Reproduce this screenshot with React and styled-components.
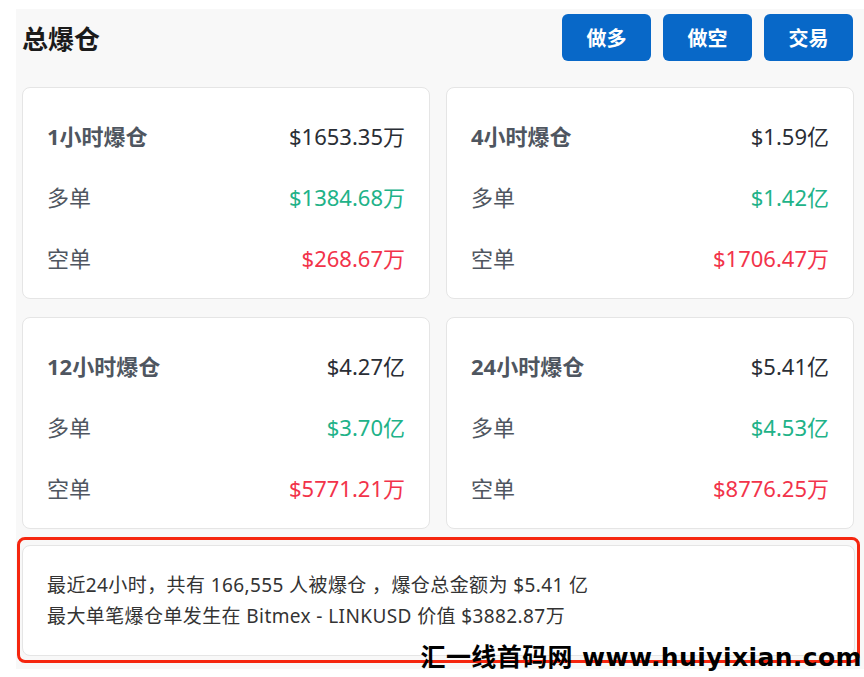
import styled, { createGlobalStyle } from "styled-components"

const GlobalStyle = createGlobalStyle`
    body {
        margin: 0;
        background: #ffffff;
        font-family: "Noto Sans", "Noto Sans CJK SC", sans-serif;
    }
`

const stats = [
    { title: "1小时爆仓", total: "$1653.35万", long: "$1384.68万", short: "$268.67万" },
    { title: "4小时爆仓", total: "$1.59亿", long: "$1.42亿", short: "$1706.47万" },
    { title: "12小时爆仓", total: "$4.27亿", long: "$3.70亿", short: "$5771.21万" },
    { title: "24小时爆仓", total: "$5.41亿", long: "$4.53亿", short: "$8776.25万" },
]

export default function App() {
    return (
        <>
            <GlobalStyle />
            <Page>
                <Panel>
                    <Header>
                        <Title>总爆仓</Title>
                        <Actions>
                            <ActionButton>做多</ActionButton>
                            <ActionButton>做空</ActionButton>
                            <ActionButton>交易</ActionButton>
                        </Actions>
                    </Header>
                    <Grid>
                        {stats.map((s) => (
                            <Card key={s.title}>
                                <Row>
                                    <Label $bold>{s.title}</Label>
                                    <Value>{s.total}</Value>
                                </Row>
                                <Row>
                                    <Label>多单</Label>
                                    <Value $tone="up">{s.long}</Value>
                                </Row>
                                <Row>
                                    <Label>空单</Label>
                                    <Value $tone="down">{s.short}</Value>
                                </Row>
                            </Card>
                        ))}
                    </Grid>
                    <Highlight>
                        <Summary>
                            <Line>最近24小时，共有 166,555 人被爆仓 ，爆仓总金额为 $5.41 亿</Line>
                            <Line>最大单笔爆仓单发生在 Bitmex - LINKUSD 价值 $3882.87万</Line>
                        </Summary>
                    </Highlight>
                </Panel>
                <Watermark>汇一线首码网 www.huiyixian.com</Watermark>
            </Page>
        </>
    )
}

const Page = styled.div`
    position: relative;
    width: 864px;
    height: 677px;
    padding: 9px 0 0 16px;
    box-sizing: border-box;
    overflow: hidden;
`

const Panel = styled.div`
    background: #f8f8f8;
    height: 660px;
    padding: 5px 0 0 6px;
    box-sizing: border-box;
`

const Header = styled.div`
    display: flex;
    align-items: center;
    justify-content: space-between;
    width: 831px;
    height: 47px;
`

const Title = styled.h1`
    margin: 0;
    font-size: 26px;
    font-weight: 700;
    color: #1b1b1b;
    line-height: 1;
    padding-top: 2px;
`

const Actions = styled.div`
    display: flex;
    gap: 12px;
`

const ActionButton = styled.button`
    width: 89px;
    height: 47px;
    border: none;
    border-radius: 6px;
    background: #0868c8;
    color: #ffffff;
    font-family: "Noto Sans CJK SC", sans-serif;
    font-size: 20px;
    font-weight: 700;
    cursor: pointer;
`

const Grid = styled.div`
    display: grid;
    grid-template-columns: 408px 408px;
    column-gap: 16px;
    row-gap: 18px;
    margin-top: 26px;
`

const Card = styled.div`
    background: #ffffff;
    border: 1px solid #e5e5e5;
    border-radius: 8px;
    height: 212px;
    box-sizing: border-box;
    padding: 16px 24px 0 24px;
    display: flex;
    flex-direction: column;
`

const Row = styled.div`
    display: flex;
    align-items: center;
    justify-content: space-between;
    height: 61px;
`

const Label = styled.span`
    font-size: 22px;
    font-weight: ${(p) => (p.$bold ? 700 : 400)};
    color: #4f5660;
`

const toneColors = {
    up: "#21b288",
    down: "#f2334a",
}

const Value = styled.span`
    font-size: 22px;
    color: ${(p) => toneColors[p.$tone] || "#2a2e35"};
`

const Highlight = styled.div`
    margin: 8px 0 0 -5px;
    width: 843px;
    height: 126px;
    border: 3px solid #f5260f;
    border-radius: 8px;
    box-sizing: border-box;
    padding: 5px 2px 4px 2px;
`

const Summary = styled.div`
    background: #ffffff;
    border: 1px solid #e5e5e5;
    border-radius: 8px;
    height: 100%;
    box-sizing: border-box;
    padding: 0 24px;
    display: flex;
    flex-direction: column;
    justify-content: center;
    gap: 7px;
`

const Line = styled.div`
    font-size: 19px;
    color: #333333;
    line-height: 24px;
    letter-spacing: 0.4px;
`

const Watermark = styled.div`
    position: absolute;
    right: 2px;
    top: 643px;
    font-family: "DejaVu Sans", "Noto Sans CJK SC", sans-serif;
    font-size: 25px;
    line-height: 30px;
    font-weight: 700;
    color: #000000;
    letter-spacing: 0.4px;
    white-space: nowrap;
`
